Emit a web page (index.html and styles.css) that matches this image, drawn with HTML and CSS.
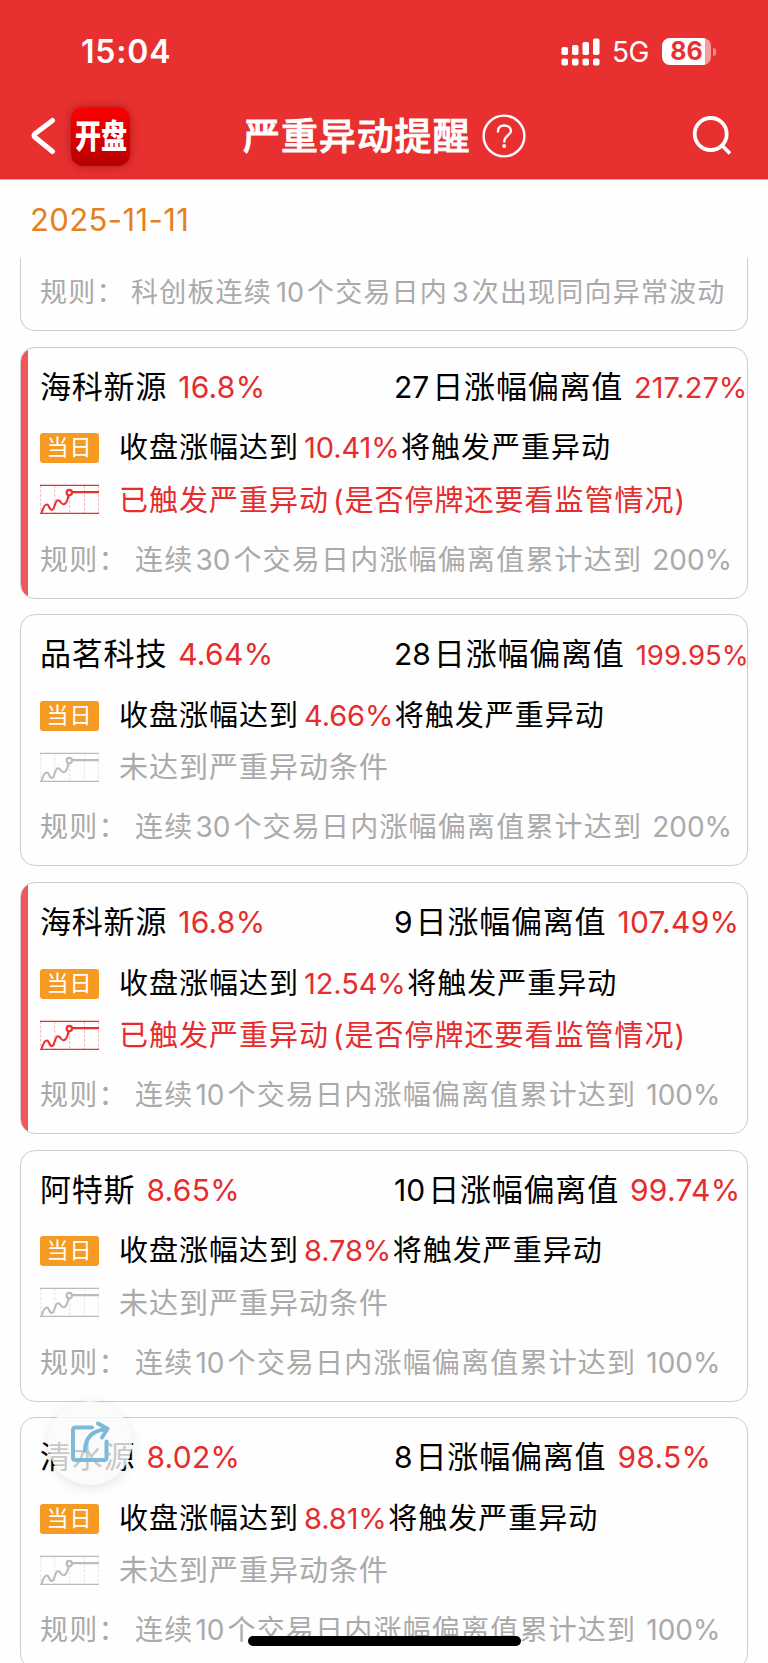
FILE: index.html
```html
<!DOCTYPE html>
<html lang="zh-CN">
<head>
  <meta charset="UTF-8">
  <meta name="viewport" content="width=device-width, initial-scale=1.0">
  <title>严重异动提醒</title>
  <link rel="stylesheet" href="styles.css">
</head>
<body>

  <svg class="symbols" xmlns="http://www.w3.org/2000/svg">
    <symbol id="trend" viewBox="0 0 59 30">
      <path class="trend-grid" d="M.7 1v28M14.7 1v28M29.7 12v17M44.5 1v28M58.4 1v28"/>
      <path class="trend-frame" d="M0 1.3h59M0 29.3h59"/>
      <path class="trend-line" d="M1.7 28.7C3 24 4.5 20.5 6.8 20.5C9.5 20.5 9 26 11.7 26C15 26 14.5 16.2 18 16.2C21 16.2 20.5 20.2 23.5 20.2C27 20.2 27.8 15 28.6 11.2"/>
      <circle class="trend-line" cx="29.3" cy="8.6" r="2.7"/>
      <path class="trend-line" d="M32 8.1h27"/>
    </symbol>
  </svg>

  <header class="header">
    <div class="status-bar">
      <span class="time">15:04</span>
      <svg class="signal" width="40" height="28" viewBox="0 0 40 28">
        <rect x=".5" y="9" width="6.5" height="8" rx="1.8"/>
        <rect x="11" y="7" width="6.5" height="10" rx="1.8"/>
        <rect x="21.5" y="4" width="6.5" height="13" rx="1.8"/>
        <rect x="32" y=".5" width="6.5" height="16.5" rx="1.8"/>
        <rect x=".5" y="20.5" width="6.5" height="7" rx="1.8"/>
        <rect x="11" y="20.5" width="6.5" height="7" rx="1.8"/>
        <rect x="21.5" y="20.5" width="6.5" height="7" rx="1.8"/>
        <rect x="32" y="20.5" width="6.5" height="7" rx="1.8"/>
      </svg>
      <span class="network">5G</span>
      <span class="battery">86</span>
      <span class="battery-cap"></span>
    </div>
    <div class="nav-bar">
      <svg class="back" width="25" height="38" viewBox="0 0 25 38"><path d="M21.500 3.500L4 16.700Q2 18.500 4 20.300L21.500 34.500"/></svg>
      <div class="app-icon"><span>开盘</span></div>
      <h1 class="title">严重异动提醒</h1>
      <svg class="help" width="44" height="44" viewBox="0 0 44 44">
        <circle cx="22" cy="22" r="20.4"/>
        <path d="M15.9 17.5C15.9 13.5 18.5 11.5 22 11.5C26 11.5 29 13.6 29 17C29 21 22.3 21.5 22.3 27.5"/>
        <circle class="dot" cx="22.2" cy="32" r="1.9"/>
      </svg>
      <svg class="search" width="42" height="42" viewBox="0 0 42 42"><circle cx="19.7" cy="19" r="16"/><path d="M31 30.5L39 38.5"/></svg>
    </div>
  </header>

  <div class="date">2025-11-11</div>

  <main class="list">
    <section class="card card-cut">
      <div class="rule"><span class="rule-label">规则：</span>科创板连续<i>10</i>个交易日内<i>3</i>次出现同向异常波动</div>
    </section>

    <section class="card triggered">
      <div class="head"><div class="stock">海科新源<b>16.8%</b></div><div class="deviation"><i>27</i>日涨幅偏离值<b class="small">217.27%</b></div></div>
      <div class="row"><span class="tag">当日</span>收盘涨幅达到<b>10.41%</b>将触发严重异动</div>
      <div class="row state"><svg class="trend"><use href="#trend"/></svg>已触发严重异动<i>(</i>是否停牌还要看监管情况<i>)</i></div>
      <div class="rule"><span class="rule-label">规则：</span>连续<i>30</i>个交易日内涨幅偏离值累计达到<em>200%</em></div>
    </section>

    <section class="card">
      <div class="head"><div class="stock">品茗科技<b>4.64%</b></div><div class="deviation"><i>28</i>日涨幅偏离值<b class="smaller">199.95%</b></div></div>
      <div class="row"><span class="tag">当日</span>收盘涨幅达到<b>4.66%</b>将触发严重异动</div>
      <div class="row state"><svg class="trend"><use href="#trend"/></svg>未达到严重异动条件</div>
      <div class="rule"><span class="rule-label">规则：</span>连续<i>30</i>个交易日内涨幅偏离值累计达到<em>200%</em></div>
    </section>

    <section class="card triggered">
      <div class="head"><div class="stock">海科新源<b>16.8%</b></div><div class="deviation"><i>9</i>日涨幅偏离值<b>107.49%</b></div></div>
      <div class="row"><span class="tag">当日</span>收盘涨幅达到<b>12.54%</b>将触发严重异动</div>
      <div class="row state"><svg class="trend"><use href="#trend"/></svg>已触发严重异动<i>(</i>是否停牌还要看监管情况<i>)</i></div>
      <div class="rule"><span class="rule-label">规则：</span>连续<i>10</i>个交易日内涨幅偏离值累计达到<em>100%</em></div>
    </section>

    <section class="card">
      <div class="head"><div class="stock">阿特斯<b>8.65%</b></div><div class="deviation"><i>10</i>日涨幅偏离值<b>99.74%</b></div></div>
      <div class="row"><span class="tag">当日</span>收盘涨幅达到<b>8.78%</b>将触发严重异动</div>
      <div class="row state"><svg class="trend"><use href="#trend"/></svg>未达到严重异动条件</div>
      <div class="rule"><span class="rule-label">规则：</span>连续<i>10</i>个交易日内涨幅偏离值累计达到<em>100%</em></div>
    </section>

    <section class="card">
      <div class="head"><div class="stock">清水源<b>8.02%</b></div><div class="deviation"><i>8</i>日涨幅偏离值<b>98.5%</b></div></div>
      <div class="row"><span class="tag">当日</span>收盘涨幅达到<b>8.81%</b>将触发严重异动</div>
      <div class="row state"><svg class="trend"><use href="#trend"/></svg>未达到严重异动条件</div>
      <div class="rule"><span class="rule-label">规则：</span>连续<i>10</i>个交易日内涨幅偏离值累计达到<em>100%</em></div>
    </section>
  </main>

  <div class="share">
    <svg width="40" height="42" viewBox="0 0 40 42">
      <path d="M22 6.5H5.5Q3 6.5 3 9V36.500Q3 39 5.500 39H34Q36.500 39 36.500 36.500V20.500"/>
      <path d="M15 30C15 17 22 9.500 36.500 8M28 2.500L37.500 7.800L32 16.500"/>
    </svg>
  </div>
  <div class="home-bar"></div>

</body>
</html>
```
FILE: styles.css
```css
* {
  box-sizing: border-box;
}

body {
  margin: 0;
  height: 1663px;
  overflow: hidden;
  position: relative;
  display: flex;
  flex-direction: column;
  background: #fefefe;
  color: #000;
  font-family: Inter, "Noto Sans CJK SC", sans-serif;
  font-weight: 400;
}

i,
em,
b {
  font-style: normal;
  font-weight: 400;
}

.symbols {
  display: none;
}

/* header */
.header {
  flex: none;
  height: 180px;
  background: #e83030;
  border-bottom: 1px solid #f3a09f;
  color: #fff;
}

.status-bar {
  display: flex;
  align-items: center;
  height: 103px;
  padding-left: 81px;
}

.time {
  width: 480px;
  font-size: 32px;
  font-weight: 600;
  letter-spacing: 0.8px;
}

.signal {
  fill: #fff;
}

.network {
  width: 50px;
  margin-left: 11px;
  font-size: 28px;
  letter-spacing: -0.6px;
}

.battery {
  width: 49px;
  height: 27px;
  border-radius: 8px;
  background: linear-gradient(90deg, #fff 43px, #f69a9a 43px);
  color: #e83030;
  font-size: 25px;
  font-weight: 700;
  line-height: 27px;
  text-align: center;
}

.battery-cap {
  width: 3px;
  height: 8px;
  margin-left: 2px;
  border-radius: 0 4px 4px 0;
  background: #f28a8a;
}

.nav-bar {
  display: flex;
  align-items: center;
  height: 66px;
  padding-left: 31px;
}

.back,
.help,
.search {
  flex: none;
  fill: none;
  stroke: #fff;
  stroke-linecap: round;
}

.back {
  stroke-width: 5;
}

.app-icon {
  display: flex;
  align-items: center;
  justify-content: center;
  width: 59px;
  height: 59px;
  margin-left: 15px;
  border-radius: 12px;
  background: linear-gradient(#fe0000, #b60000);
  box-shadow: 0 0 8px rgba(90, 0, 0, 0.45);
}

.app-icon span {
  font-size: 33px;
  font-weight: 900;
  line-height: 59px;
  white-space: nowrap;
  transform: scaleX(0.79);
}

.title {
  width: 239px;
  margin: 0 0 0 113px;
  padding-top: 2px;
  font-size: 37px;
  font-weight: 500;
  line-height: 60px;
  letter-spacing: 0.9px;
  white-space: nowrap;
  -webkit-text-stroke: 0.8px #fff;
}

.help {
  stroke-width: 2.4;
}

.help .dot {
  fill: #fff;
  stroke: none;
}

.search {
  margin-left: 165px;
  stroke-width: 3.8;
  stroke-linecap: butt;
}

.date {
  flex: none;
  height: 78px;
  padding-left: 30px;
  color: #e5801f;
  font-size: 31px;
  line-height: 79px;
  letter-spacing: 0.4px;
}

/* list */
.list {
  flex: 1;
  min-height: 0;
  overflow: hidden;
  padding: 0 20px;
}

.card {
  height: 252px;
  margin-bottom: 15.7px;
  padding: 15px 0 0 19px;
  border: 1px solid #ccc;
  border-radius: 15px;
  overflow: hidden;
  white-space: nowrap;
}

.card-cut {
  height: 73px;
  padding-top: 11px;
  border-top: 0;
  border-radius: 0 0 15px 15px;
}

.triggered {
  background: linear-gradient(90deg, #f05658 7px, transparent 7px);
}

.head {
  display: flex;
  height: 48px;
  font-size: 31px;
  line-height: 48px;
  letter-spacing: 0.8px;
}

.stock {
  flex: none;
  width: 354px;
}

.head b {
  margin-left: 11px;
  color: #e62c2c;
  font-size: 30px;
  letter-spacing: 0.3px;
}

.head i {
  margin-right: 3px;
  font-size: 30px;
  letter-spacing: 0;
}

.head .small {
  font-size: 29px;
  letter-spacing: 0;
}

.head .smaller {
  font-size: 27.5px;
  letter-spacing: 0;
}

.row {
  display: flex;
  align-items: center;
  height: 51px;
  margin-top: 12px;
  font-size: 29px;
  line-height: 50px;
  letter-spacing: 1px;
}

.row b {
  margin: 0 1.5px 0 5px;
  color: #e62c2c;
  letter-spacing: -0.1px;
}

.tag {
  width: 59px;
  height: 30px;
  margin-right: 20px;
  border-radius: 3px;
  background: #f69a22;
  color: #fff;
  font-size: 22px;
  line-height: 28px;
  text-align: center;
}

.state {
  margin-top: 0;
  padding-top: 3px;
  color: #aaa;
}

.state i {
  margin-left: 4px;
}

.state i + i {
  margin-left: 0;
}

.triggered .state {
  color: #e62c2c;
}

.trend {
  flex: none;
  width: 59px;
  height: 30px;
  margin: 0 20px 3px 0;
  fill: none;
  stroke: #bbb;
}

.triggered .trend {
  stroke: #e83030;
}

.trend-frame {
  stroke-width: 1.3;
}

.trend-grid {
  stroke-width: 1;
  stroke-dasharray: 3 1.5;
  opacity: 0.35;
}

.trend-line {
  stroke-width: 2.1;
}

.rule {
  height: 48px;
  margin-top: 11px;
  color: #aaa;
  font-size: 28px;
  line-height: 48px;
  letter-spacing: 1.2px;
}

.card-cut .rule {
  margin-top: 0;
  font-size: 27px;
}

.rule-label {
  display: inline-block;
  width: 95px;
}

.card-cut .rule-label {
  width: 91px;
}

.rule i {
  margin: 0 3px 0 2px;
  letter-spacing: 0;
}

.card-cut .rule i {
  margin-left: 4px;
}

.rule em {
  margin-left: 10px;
  letter-spacing: 0;
}

/* floating button and home indicator */
.share {
  position: absolute;
  left: 48px;
  top: 1401px;
  width: 84px;
  height: 84px;
  padding: 20px 0 0 22px;
  border-radius: 50%;
  background: rgba(250, 250, 250, 0.8);
  box-shadow: 0 3px 12px rgba(0, 0, 0, 0.1);
}

.share svg {
  fill: none;
  stroke: #7cb9da;
  stroke-width: 4;
  stroke-linecap: round;
  stroke-linejoin: round;
}

.home-bar {
  position: absolute;
  left: 248px;
  top: 1636px;
  width: 273px;
  height: 10px;
  border-radius: 5px;
  background: #000;
}
```
